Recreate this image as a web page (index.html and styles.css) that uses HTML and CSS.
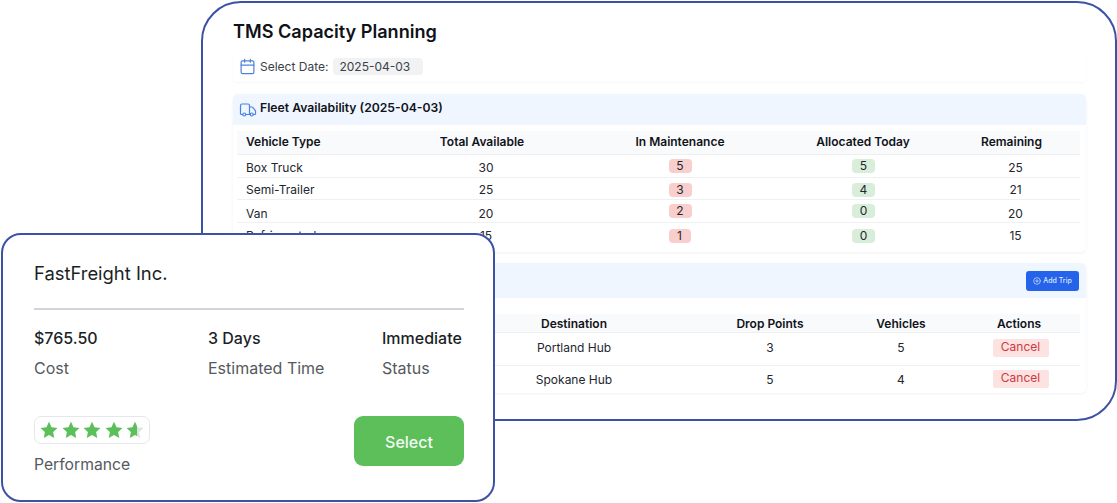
FILE: index.html
```html
<!DOCTYPE html>
<html lang="en">
<head>
<meta charset="utf-8">
<title>TMS Capacity Planning</title>
<link rel="stylesheet" href="styles.css">
</head>
<body>
<main class="stage">
  <section class="window planner">
    <h1 class="planner-title">TMS Capacity Planning</h1>
    <div class="date-bar">
      <svg class="icon icon-date" viewBox="0 0 24 24" aria-hidden="true"><rect x="3" y="4" width="18" height="18" rx="2"/><path d="M8 2v4M16 2v4M3 10h18"/></svg>
      <span class="date-label">Select Date:</span>
      <span class="date-chip">2025-04-03</span>
    </div>
    <div class="card fleet">
      <div class="card-head fleet-head">
        <svg class="icon icon-truck" viewBox="0 0 24 24" aria-hidden="true"><path d="M14 18V6a2 2 0 0 0-2-2H4a2 2 0 0 0-2 2v11a1 1 0 0 0 1 1h2"/><path d="M15 18H9"/><path d="M19 18h2a1 1 0 0 0 1-1v-3.65a1 1 0 0 0-.22-.62l-3.48-4.35A1 1 0 0 0 17.52 8H14"/><circle cx="17" cy="18" r="2"/><circle cx="7" cy="18" r="2"/></svg>
        <h2 class="card-title">Fleet Availability (2025-04-03)</h2>
      </div>
      <table class="data fleet-table">
        <colgroup><col class="f1"><col class="f2"><col class="f3"><col class="f4"><col class="f5"></colgroup>
        <thead><tr><th class="left">Vehicle Type</th><th>Total Available</th><th>In Maintenance</th><th>Allocated Today</th><th>Remaining</th></tr></thead>
        <tbody>
          <tr class="r1"><td class="left low">Box Truck</td><td class="low shift">30</td><td><span class="pill red">5</span></td><td><span class="pill green">5</span></td><td class="low shift">25</td></tr>
          <tr class="r2"><td class="left">Semi-Trailer</td><td class="shift">25</td><td><span class="pill red">3</span></td><td><span class="pill green">4</span></td><td class="shift">21</td></tr>
          <tr class="r3"><td class="left lower">Van</td><td class="lower shift">20</td><td><span class="pill red">2</span></td><td><span class="pill green">0</span></td><td class="lower shift">20</td></tr>
          <tr class="r4"><td class="left">Refrigerated</td><td class="shift">15</td><td><span class="pill red narrow">1</span></td><td><span class="pill green">0</span></td><td class="shift">15</td></tr>
        </tbody>
      </table>
    </div>
    <div class="card trips">
      <div class="card-head trips-head">
        <button class="add-trip" type="button">
          <svg class="icon-small" viewBox="0 0 24 24" aria-hidden="true"><circle cx="12" cy="12" r="10"/><path d="M8 12h8M12 8v8"/></svg>
          Add Trip
        </button>
      </div>
      <table class="data trips-table">
        <colgroup><col class="t1"><col class="t2"><col class="t3"><col class="t4"><col class="t5"></colgroup>
        <thead><tr><th></th><th>Destination</th><th>Drop Points</th><th>Vehicles</th><th>Actions</th></tr></thead>
        <tbody>
          <tr class="t-r1"><td></td><td>Portland Hub</td><td>3</td><td>5</td><td><span class="cancel">Cancel</span></td></tr>
          <tr class="t-r2"><td></td><td>Spokane Hub</td><td>5</td><td>4</td><td><span class="cancel">Cancel</span></td></tr>
        </tbody>
      </table>
    </div>
  </section>

  <section class="window carrier">
    <h2 class="carrier-name">FastFreight Inc.</h2>
    <div class="stats">
      <div class="stat"><div class="stat-value">$765.50</div><div class="stat-label">Cost</div></div>
      <div class="stat"><div class="stat-value">3 Days</div><div class="stat-label">Estimated Time</div></div>
      <div class="stat"><div class="stat-value">Immediate</div><div class="stat-label">Status</div></div>
    </div>
    <div class="carrier-foot">
      <div class="rating">
        <div class="stars">
          <svg class="star" viewBox="0 0 24 24" aria-hidden="true"><path d="M12 1l3.4 7.3 7.9 1-5.8 5.5 1.5 7.9L12 18.8l-7 3.9 1.5-7.9L.7 9.3l7.9-1z"/></svg>
          <svg class="star" viewBox="0 0 24 24" aria-hidden="true"><path d="M12 1l3.4 7.3 7.9 1-5.8 5.5 1.5 7.9L12 18.8l-7 3.9 1.5-7.9L.7 9.3l7.9-1z"/></svg>
          <svg class="star" viewBox="0 0 24 24" aria-hidden="true"><path d="M12 1l3.4 7.3 7.9 1-5.8 5.5 1.5 7.9L12 18.8l-7 3.9 1.5-7.9L.7 9.3l7.9-1z"/></svg>
          <svg class="star" viewBox="0 0 24 24" aria-hidden="true"><path d="M12 1l3.4 7.3 7.9 1-5.8 5.5 1.5 7.9L12 18.8l-7 3.9 1.5-7.9L.7 9.3l7.9-1z"/></svg>
          <svg class="star" viewBox="0 0 24 24" aria-hidden="true"><defs><linearGradient id="part"><stop offset="62%" stop-color="#5cbf5a"/><stop offset="62%" stop-color="#dbe5dc"/></linearGradient></defs><path fill="url(#part)" d="M12 1l3.4 7.3 7.9 1-5.8 5.5 1.5 7.9L12 18.8l-7 3.9 1.5-7.9L.7 9.3l7.9-1z"/></svg>
        </div>
        <div class="rating-label">Performance</div>
      </div>
      <button class="select" type="button">Select</button>
    </div>
  </section>
</main>
</body>
</html>
```

FILE: styles.css
```css
* { box-sizing: border-box; }
html, body { margin: 0; padding: 0; background: #fff; overflow: hidden; }
body { font-family: Inter, "Liberation Sans", sans-serif; color: #15181e; }

.stage { position: relative; width: 1117px; height: 503px; overflow: hidden; }
.window { position: absolute; background: #fff; border: 2px solid #3b52a5; }

/* back window */
.planner { left: 201px; top: 1px; width: 916px; height: 420px; border-radius: 40px; padding: 16px 29px 0 30px; }
.planner-title { margin: 0 0 9px; font-size: 18.1px; line-height: 24px; font-weight: 600; color: #0f1218; }

.date-bar { display: flex; align-items: center; height: 30px; padding: 0 0 2px 6px; border-radius: 4px; box-shadow: 0 1px 2px rgba(0,0,0,.04); margin-bottom: 12px; }
.icon { flex: none; fill: none; stroke: #4d82dc; stroke-linecap: round; stroke-linejoin: round; }
.icon-date { width: 17px; height: 17px; stroke-width: 1.7; margin-right: 4px; }
.icon-truck { width: 18px; height: 18px; stroke-width: 1.6; margin-right: 3px; }
.date-label { font-size: 12px; color: #3c4148; margin-right: 5px; }
.date-chip { display: block; width: 90px; height: 17px; line-height: 17px; padding-left: 6px; border-radius: 4px; background: #f1f2f3; font-size: 12px; color: #3c4148; }

.card { border-radius: 5px; box-shadow: 0 1px 3px rgba(0,0,0,.06); }
.fleet { height: 158px; margin-bottom: 11px; }
.trips { height: 130px; }
.card-head { display: flex; align-items: center; background: #eff6ff; border-radius: 5px 5px 0 0; }
.fleet-head { height: 31px; padding-left: 6px; margin-bottom: 6px; }
.trips-head { height: 35px; justify-content: flex-end; padding-right: 7px; margin-bottom: 16px; }
.card-title { margin: 0; font-size: 12.2px; line-height: 16px; font-weight: 600; color: #10131a; position: relative; top: -2px; }

.add-trip { display: flex; align-items: center; justify-content: center; gap: 2px; width: 53px; height: 20px; padding: 0; border: 0; border-radius: 3px; background: #2563eb; color: #dfe8fb; font: 500 7px Inter, "Liberation Sans", sans-serif; }
.icon-small { width: 8px; height: 8px; fill: none; stroke: #dfe8fb; stroke-width: 2; stroke-linecap: round; }

.data { table-layout: fixed; width: 843px; margin-left: 4px; border-collapse: collapse; font-size: 12px; color: #23272e; }
.data th { height: 23px; padding: 0 0 2px; font-size: 12px; font-weight: 600; color: #10131a; background: #f9fafb; border-bottom: 1px solid #eceef0; text-align: center; }
.trips-table th { height: 18px; padding: 1px 0 0; }
.data td { padding: 0; text-align: center; border-bottom: 1px solid #eef0f1; vertical-align: middle; }
.data tr:last-child td { border-bottom: 0; }
.data .left { text-align: left; padding-left: 9px; }
.f1 { width: 150px; } .f2 { width: 190px; } .f3 { width: 206px; } .f4 { width: 160px; } .f5 { width: 137px; }
.t1 { width: 215px; } .t2 { width: 244px; } .t3 { width: 148px; } .t4 { width: 114px; } .t5 { width: 122px; }
.r1 { height: 23px; } .r2 { height: 22px; } .r3 { height: 23px; } .r4 { height: 26px; }
.data td.shift { padding-left: 8px; }
.data td.low { padding-top: 3px; }
.data td.lower { padding-top: 5px; }
.r2 td { padding-top: 2px; }
.t-r1 { height: 33px; } .t-r2 { height: 28px; }
.t-r1 td { padding-bottom: 2px; }

.pill { display: inline-block; width: 23px; height: 14px; line-height: 14px; border-radius: 4px; vertical-align: middle; color: #23272e; }
.red { background: #f8cfcc; }
.green { background: #d9eeda; margin-left: 1px; }
.narrow { width: 22px; margin-right: 1px; }
.cancel { display: inline-block; width: 56px; height: 18px; line-height: 15px; border-radius: 2px; background: #fde2e2; color: #d0393b; font-size: 12px; margin-left: 3px; vertical-align: middle; }

/* front window */
.carrier { left: 1px; top: 233px; width: 494px; height: 269px; border-radius: 20px; padding: 26px 29px 0 31px; }
.carrier-name { margin: 0; font-size: 18.4px; line-height: 24px; font-weight: 400; color: #1c1f26; padding-bottom: 23px; border-bottom: 2px solid #d2d4db; }
.stats { display: flex; justify-content: space-between; padding-top: 18px; }
.stat:nth-child(1) { width: 174px; }
.stat:nth-child(2) { width: 174px; }
.stat:nth-child(3) { flex: 1; }
.stat-value { font-size: 16px; line-height: 20px; font-weight: 500; color: #1c1f26; white-space: nowrap; }
.stat-label { font-size: 16px; line-height: 20px; margin-top: 10px; color: #555960; white-space: nowrap; }
.carrier-foot { display: flex; justify-content: space-between; align-items: flex-start; margin-top: 38px; }
.stars { display: flex; align-items: center; justify-content: space-between; width: 116px; height: 28px; padding: 0 5px; margin-bottom: 11px; border: 1px solid #e5e7ea; border-radius: 7px; }
.star { width: 18px; height: 18px; fill: #5cbf5a; flex: none; }
.rating-label { font-size: 15.7px; line-height: 20px; color: #555960; }
.select { width: 110px; height: 50px; padding: 2px 0 0; border: 0; border-radius: 9px; background: #5cbf5a; color: #f3fbf3; font: 500 16px Inter, "Liberation Sans", sans-serif; }
```
